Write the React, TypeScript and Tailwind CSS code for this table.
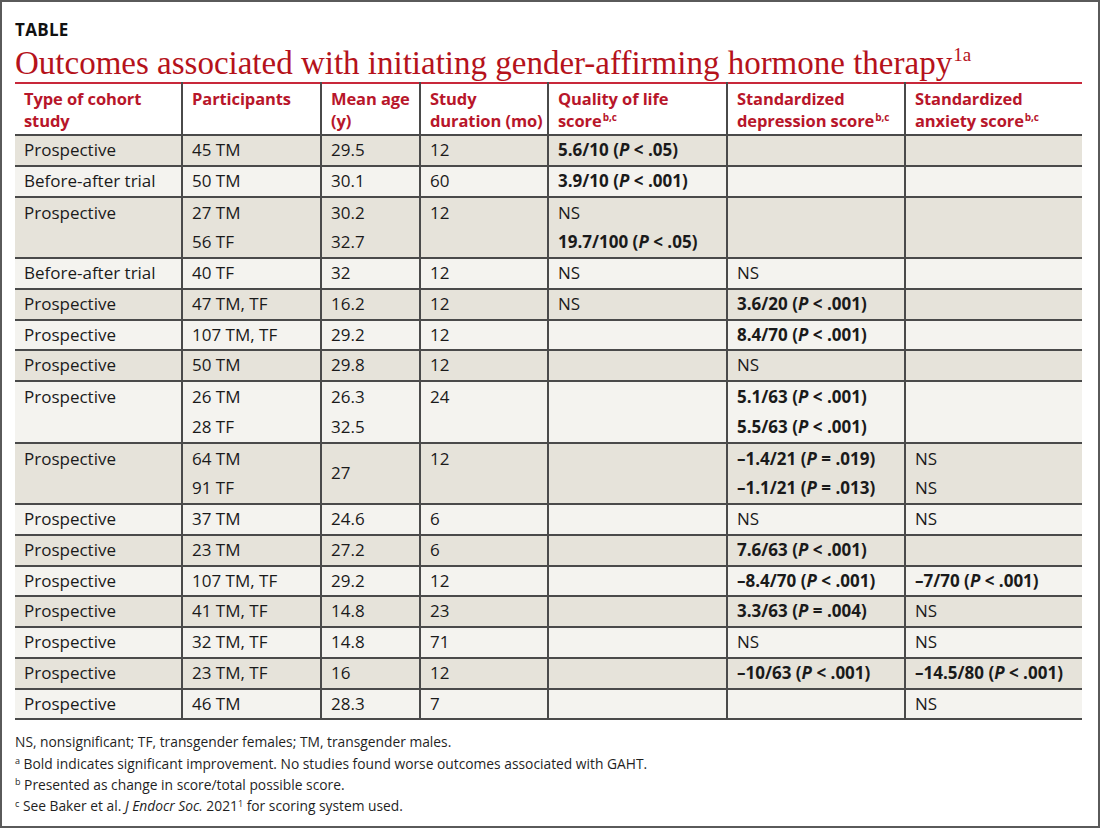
import React from 'react';

type Cell = React.ReactNode;

interface Row {
  cells: Cell[][];
  shaded: boolean;
  centerAge?: boolean;
}

const P: React.FC<{ op: string; v: string }> = ({ op, v }) => (
  <>
    (<i>P</i> {op} {v})
  </>
);

const B: React.FC<{ children: React.ReactNode }> = ({ children }) => <span className="font-bold">{children}</span>;

const rows: Row[] = [
  { shaded: true, cells: [['Prospective'], ['45 TM'], ['29.5'], ['12'], [<B>5.6/10 <P op="<" v=".05" /></B>], [], []] },
  { shaded: false, cells: [['Before-after trial'], ['50 TM'], ['30.1'], ['60'], [<B>3.9/10 <P op="<" v=".001" /></B>], [], []] },
  {
    shaded: true,
    cells: [['Prospective'], ['27 TM', '56 TF'], ['30.2', '32.7'], ['12'], ['NS', <B>19.7/100 <P op="<" v=".05" /></B>], [], []],
  },
  { shaded: false, cells: [['Before-after trial'], ['40 TF'], ['32'], ['12'], ['NS'], ['NS'], []] },
  { shaded: true, cells: [['Prospective'], ['47 TM, TF'], ['16.2'], ['12'], ['NS'], [<B>3.6/20 <P op="<" v=".001" /></B>], []] },
  { shaded: false, cells: [['Prospective'], ['107 TM, TF'], ['29.2'], ['12'], [], [<B>8.4/70 <P op="<" v=".001" /></B>], []] },
  { shaded: true, cells: [['Prospective'], ['50 TM'], ['29.8'], ['12'], [], ['NS'], []] },
  {
    shaded: false,
    cells: [
      ['Prospective'],
      ['26 TM', '28 TF'],
      ['26.3', '32.5'],
      ['24'],
      [],
      [<B>5.1/63 <P op="<" v=".001" /></B>, <B>5.5/63 <P op="<" v=".001" /></B>],
      [],
    ],
  },
  {
    shaded: true,
    centerAge: true,
    cells: [
      ['Prospective'],
      ['64 TM', '91 TF'],
      ['27'],
      ['12'],
      [],
      [<B>–1.4/21 <P op="=" v=".019" /></B>, <B>–1.1/21 <P op="=" v=".013" /></B>],
      ['NS', 'NS'],
    ],
  },
  { shaded: false, cells: [['Prospective'], ['37 TM'], ['24.6'], ['6'], [], ['NS'], ['NS']] },
  { shaded: true, cells: [['Prospective'], ['23 TM'], ['27.2'], ['6'], [], [<B>7.6/63 <P op="<" v=".001" /></B>], []] },
  {
    shaded: false,
    cells: [['Prospective'], ['107 TM, TF'], ['29.2'], ['12'], [], [<B>–8.4/70 <P op="<" v=".001" /></B>], [<B>–7/70 <P op="<" v=".001" /></B>]],
  },
  { shaded: true, cells: [['Prospective'], ['41 TM, TF'], ['14.8'], ['23'], [], [<B>3.3/63 <P op="=" v=".004" /></B>], ['NS']] },
  { shaded: false, cells: [['Prospective'], ['32 TM, TF'], ['14.8'], ['71'], [], ['NS'], ['NS']] },
  {
    shaded: true,
    cells: [['Prospective'], ['23 TM, TF'], ['16'], ['12'], [], [<B>–10/63 <P op="<" v=".001" /></B>], [<B>–14.5/80 <P op="<" v=".001" /></B>]],
  },
  { shaded: false, cells: [['Prospective'], ['46 TM'], ['28.3'], ['7'], [], [], ['NS']] },
];

const widths = ['w-[167px]', 'w-[139px]', 'w-[99px]', 'w-[128px]', 'w-[179px]', 'w-[178px]', 'w-[177px]'];

const Sup = () => <sup className="text-[10px] font-bold -top-[6px] ml-[1px]">b,c</sup>;

const headers: React.ReactNode[] = [
  <>Type of cohort<br />study</>,
  <>Participants</>,
  <>Mean age<br />(y)</>,
  <>Study<br />duration (mo)</>,
  <>Quality of life<br />score<Sup /></>,
  <>Standardized<br />depression score<Sup /></>,
  <>Standardized<br />anxiety score<Sup /></>,
];

export default function App() {
  const sans = { fontFamily: '"Open Sans", "Noto Sans", sans-serif' };
  return (
    <div className="w-[1100px] h-[828px] box-border border-2 border-[#5a5a5a] bg-white pl-[13px] pt-[16px]" style={sans}>
      <div className="text-[17px] font-bold leading-[23px] text-[#111] tracking-[0.3px]">TABLE</div>
      <h1
        className="mt-[4px] text-[33px] leading-[36px] text-[#b5121b] whitespace-nowrap"
        style={{ fontFamily: '"Liberation Serif", "Times New Roman", serif' }}
      >
        Outcomes associated with initiating gender-affirming hormone therapy
        <sup className="text-[19px] leading-none -top-[13px] ml-[1px]">1a</sup>
      </h1>
      <table className="mt-[1px] w-[1067px] border-collapse table-fixed text-[17px] text-[#1a1a1a]">
        <thead>
          <tr className="border-t-2 border-[#c8283a] border-b-2 border-b-[#4a4a4a]">
            {headers.map((h, i) => (
              <th
                key={i}
                className={`${widths[i]} ${i > 0 ? 'border-l-2 border-[#4a4a4a]' : ''} text-left align-top font-bold text-[16.5px] text-[#b8162a] leading-[22px] pl-[9px] pt-[4px] pb-[2px] whitespace-nowrap tracking-[-0.1px]`}
              >
                {h}
              </th>
            ))}
          </tr>
        </thead>
        <tbody>
          {rows.map((r, ri) => {
            const double = r.cells.some((c) => c.length > 1);
            const lh = double ? 'leading-[29.75px]' : 'leading-[28.75px]';
            return (
              <tr key={ri} className={`${r.shaded ? 'bg-[#e6e3da]' : 'bg-[#f4f3ef]'} border-b-2 border-[#4a4a4a]`}>
                {r.cells.map((c, ci) => (
                  <td
                    key={ci}
                    className={`${ci > 0 ? 'border-l-2 border-[#4a4a4a]' : ''} ${
                      r.centerAge && ci === 2 ? 'align-middle' : 'align-top'
                    } ${lh} p-0 pl-[9px] whitespace-nowrap`}
                  >
                    {c.map((line, li) => (
                      <div key={li}>{line}</div>
                    ))}
                    {c.length === 0 && <div>&nbsp;</div>}
                  </td>
                ))}
              </tr>
            );
          })}
        </tbody>
      </table>
      <div className="mt-[11px] text-[13.8px] leading-[21.3px] text-[#1f1f1f]">
        <p>NS, nonsignificant; TF, transgender females; TM, transgender males.</p>
        <p>
          <sup className="text-[9px]">a</sup> Bold indicates significant improvement. No studies found worse outcomes associated with GAHT.
        </p>
        <p>
          <sup className="text-[9px]">b</sup> Presented as change in score/total possible score.
        </p>
        <p>
          <sup className="text-[9px]">c</sup> See Baker et al. <i>J Endocr Soc.</i> 2021<sup className="text-[9px]">1</sup> for scoring system used.
        </p>
      </div>
    </div>
  );
}
